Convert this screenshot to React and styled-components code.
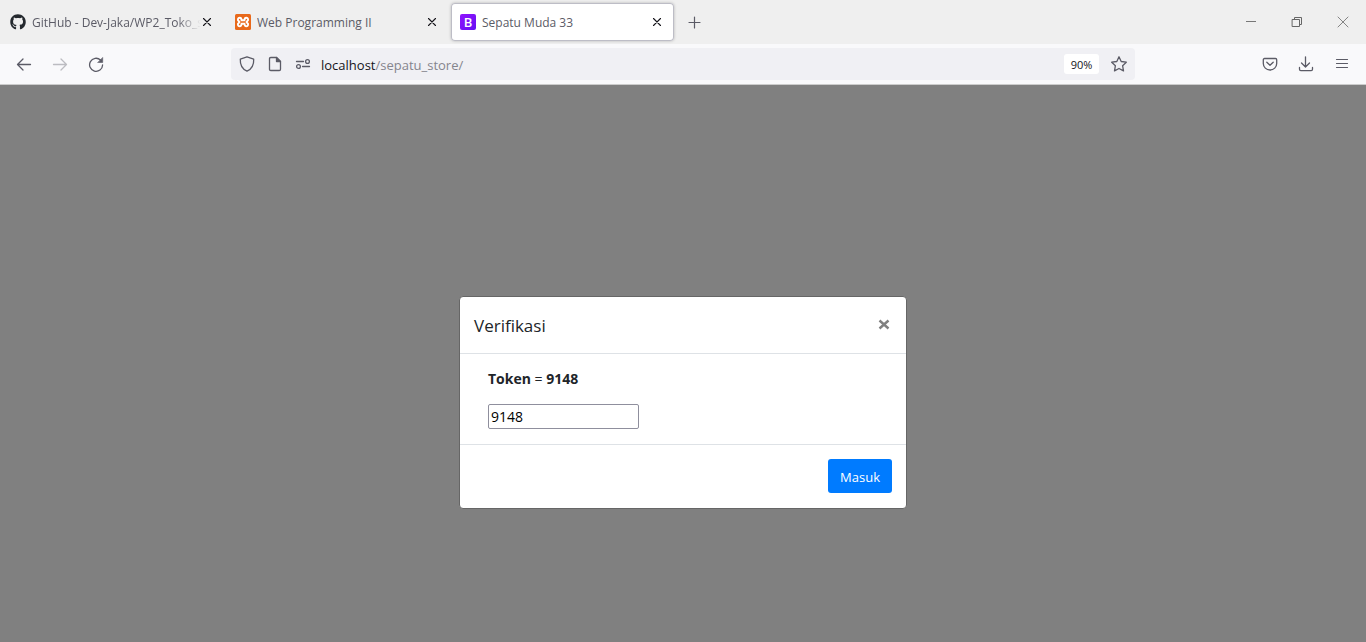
import React from "react";
import styled, { createGlobalStyle, css } from "styled-components";
import { FaGithub } from "react-icons/fa";

const GlobalStyle = createGlobalStyle`
  *, *::before, *::after { box-sizing: border-box; }
  body {
    margin: 0;
    background: #808080;
    font-family: "Open Sans", "Noto Sans", sans-serif;
  }
  button { font-family: inherit; }
`;

const Strip = styled.header`
  display: flex;
  align-items: center;
  height: 44px;
  background: #efefef;
`;

const TabList = styled.nav`
  display: flex;
  height: 44px;
  padding: 3px 0;
`;

const TabItem = styled.div`
  display: flex;
  align-items: center;
  width: 223px;
  margin: 0 1px;
  padding: 0 11px 0 9px;
  border-radius: 4px;
  ${(p) =>
    p.$active &&
    css`
      background: #fff;
      box-shadow: inset 0 0 0 1px #bdbdc6, 0 0 3px rgba(0, 0, 0, 0.25);
    `}
`;

const TabTitle = styled.span`
  flex: 1;
  min-width: 0;
  padding-top: 2px;
  margin-left: 6px;
  overflow: hidden;
  white-space: nowrap;
  font-size: 12px;
  line-height: 20px;
  color: #5b5b66;
  ${(p) => p.$fade && css`mask-image: linear-gradient(to left, transparent, #000 24px);`}
`;

const IconButton = styled.button`
  display: flex;
  flex: none;
  align-items: center;
  justify-content: center;
  width: ${(p) => p.$w || 36}px;
  height: ${(p) => p.$h || 32}px;
  padding: 0;
  border: 0;
  background: none;
  color: ${(p) => p.$color || "#5b5b66"};
`;

const WindowControls = styled.div`
  display: flex;
  margin-left: auto;
`;

const NavBar = styled.div`
  display: flex;
  align-items: center;
  height: 41px;
  padding: 0 6px;
  background: #f9f9fb;
  border-bottom: 1px solid #cccccc;
`;

const Spring = styled.div`
  flex: 0 1 117px;
`;

const AddressBar = styled.div`
  display: flex;
  flex: 1;
  align-items: center;
  height: 32px;
  padding: 0 2px;
  border-radius: 4px;
  background: #f0f0f4;
`;

const Address = styled.div`
  flex: 1;
  padding: 2px 0 0 4px;
  font-size: 13px;
  line-height: 20px;
  color: #85858d;
`;

const Host = styled.span`
  color: #15141a;
`;

const ZoomButton = styled.button`
  width: 35px;
  height: 20px;
  padding: 1px 0 0;
  margin-right: 6px;
  border: 0;
  border-radius: 3px;
  background: #fff;
  font-size: 11px;
  line-height: 20px;
  color: #15141a;
`;

const Page = styled.main`
  display: flex;
  justify-content: center;
  padding: 211px 16px 32px;
`;

const Dialog = styled.form`
  width: 100%;
  max-width: 448px;
  border: 1px solid #666;
  border-radius: 4px;
  background: #fff;
  color: #212529;
`;

const DialogHeader = styled.div`
  display: flex;
  align-items: center;
  justify-content: space-between;
  height: 57px;
  padding: 0 14px;
  border-bottom: 1px solid #dee2e6;
`;

const DialogTitle = styled.h1`
  margin: 0;
  padding-top: 2px;
  font-size: 17px;
  font-weight: 400;
  line-height: 28px;
`;

const DialogBody = styled.div`
  padding: 14px 28px 15px;
`;

const TokenLabel = styled.label`
  display: block;
  margin-bottom: 14px;
  font-size: 14px;
  line-height: 22px;
`;

const TokenInput = styled.input`
  display: block;
  width: 151px;
  height: 25px;
  padding: 1px 2px;
  border: 1px solid #8f8f9d;
  border-radius: 2px;
  background: #fff;
  color: #000;
  font: 14px/20px "Open Sans", "Noto Sans", sans-serif;
`;

const DialogFooter = styled.div`
  display: flex;
  justify-content: flex-end;
  padding: 14px 14px 15px;
  border-top: 1px solid #dee2e6;
`;

const SubmitButton = styled.button`
  height: 34px;
  padding: 2px 12px 0;
  border: 0;
  border-radius: 3px;
  background: #007bff;
  color: #fff;
  font-size: 13px;
  line-height: 20px;
`;

function Icon({ size = 16, stroke = 1.3, children }) {
  return (
    <svg
      width={size}
      height={size}
      viewBox={`0 0 ${size} ${size}`}
      fill="none"
      stroke="currentColor"
      strokeWidth={stroke}
      strokeLinecap="round"
      strokeLinejoin="round"
      aria-hidden="true"
    >
      {children}
    </svg>
  );
}

const XamppLogo = () => (
  <svg width="16" height="16" viewBox="0 0 16 16" aria-hidden="true">
    <rect width="16" height="16" rx="1.5" fill="#e8691b" />
    <path
      d="M4.700 3.800C2.800 3.800 2.300 6 3.600 7L4.500 8l-.9 1c-1.300 1-.8 3.200 1.100 3.200 1.700 0 1.800-1.300 1.800-2.500h3c0 1.200.1 2.500 1.800 2.500 1.900 0 2.400-2.200 1.100-3.200L11.500 8l.9-1c1.300-1 .8-3.200-1.100-3.200-1.700 0-1.800 1.300-1.800 2.500h-3c0-1.200-.1-2.500-1.800-2.500z"
      fill="none"
      stroke="#fff"
      strokeWidth="1.9"
      strokeLinejoin="round"
    />
  </svg>
);

const LogoSquare = styled.span`
  flex: none;
  width: 16px;
  height: 16px;
  border-radius: 2px;
  background: linear-gradient(135deg, #9013fe, #6610f2);
  color: #fff;
  font-size: 13px;
  font-weight: 600;
  line-height: 16px;
  text-align: center;
`;

const tabs = [
  { title: "GitHub - Dev-Jaka/WP2_Toko_sepatu", fade: true, icon: <FaGithub size={16} color="#24292e" /> },
  { title: "Web Programming II", icon: <XamppLogo /> },
  { title: "Sepatu Muda 33", active: true, icon: <LogoSquare aria-hidden="true">B</LogoSquare> },
];

function BrowserTab({ tab }) {
  return (
    <TabItem $active={tab.active}>
      {tab.icon}
      <TabTitle $fade={tab.fade}>{tab.title}</TabTitle>
      <IconButton $w={12} $h={24} $color="#15141a" aria-label={`Close ${tab.title}`}>
        <Icon size={12} stroke={1.1}>
          <path d="M2.500 2.500l7 7M9.500 2.500l-7 7" />
        </Icon>
      </IconButton>
    </TabItem>
  );
}

export default function App() {
  return (
    <>
      <GlobalStyle />
      <Strip>
        <TabList aria-label="Tabs">
          {tabs.map((tab) => (
            <BrowserTab key={tab.title} tab={tab} />
          ))}
        </TabList>
        <IconButton $w={38} aria-label="New tab">
          <Icon stroke={1.2}>
            <path d="M8.500 3v11M3 8.500h11" />
          </Icon>
        </IconButton>
        <WindowControls>
          <IconButton $w={46} $color="#777" aria-label="Minimize">
            <Icon stroke={1}>
              <path d="M3 7.500h10" strokeLinecap="butt" />
            </Icon>
          </IconButton>
          <IconButton $w={46} $color="#666" aria-label="Restore">
            <Icon stroke={1}>
              <path d="M3.500 5.500h7v7h-7zM5.500 5.500v-2h7v7h-2" strokeLinejoin="miter" />
            </Icon>
          </IconButton>
          <IconButton $w={46} $color="#777" aria-label="Close window">
            <Icon stroke={0.9}>
              <path d="M3 3l10 10M13 3L3 13" />
            </Icon>
          </IconButton>
        </WindowControls>
      </Strip>
      <NavBar>
        <IconButton aria-label="Back">
          <Icon stroke={1.3}>
            <path d="M14.500 8.500h-13M7 3L1.500 8.500 7 14" />
          </Icon>
        </IconButton>
        <IconButton $color="#bcbcc1" aria-label="Forward">
          <Icon stroke={1.3}>
            <path d="M1.500 8.500h13M9 3l5.500 5.500L9 14" />
          </Icon>
        </IconButton>
        <IconButton aria-label="Reload">
          <Icon stroke={1.3}>
            <path d="M14.600 9A6.500 6.500 0 1 1 12.500 4" />
            <path d="M14.700 1.800v4.700H10z" fill="currentColor" strokeWidth="0.600" />
          </Icon>
        </IconButton>
        <Spring />
        <AddressBar>
          <IconButton $w={28} aria-label="Tracking protection">
            <Icon>
              <path d="M8 .8L14.700 3.200c.3 5.500-2 9.800-6.700 12C3.300 13 1 8.700 1.300 3.200z" />
            </Icon>
          </IconButton>
          <IconButton $w={28} aria-label="Site information">
            <Icon>
              <path d="M3.800 1.500h5.700l4 4v7.800c0 .8-.5 1.200-1.200 1.200H3.800c-.8 0-1.300-.4-1.300-1.200V2.700c0-.7.5-1.200 1.300-1.200z" />
              <path d="M9.500 1.500v4h4z" fill="currentColor" />
            </Icon>
          </IconButton>
          <IconButton $w={28} aria-label="Permissions">
            <Icon>
              <path d="M1.500 5.500h7M7.500 10.500h7" />
              <circle cx="12.500" cy="5.500" r="1.900" />
              <circle cx="3.500" cy="10.500" r="1.900" />
            </Icon>
          </IconButton>
          <Address>
            <Host>localhost</Host>/sepatu_store/
          </Address>
          <ZoomButton>90%</ZoomButton>
          <IconButton $w={28} aria-label="Bookmark">
            <Icon>
              <path d="M8 .8l2.200 4.700 5.100.7-3.700 3.500.9 5.200L8 12.500l-4.500 2.400.9-5.200L.7 6.200l5.100-.7z" />
            </Icon>
          </IconButton>
        </AddressBar>
        <Spring />
        <IconButton aria-label="Save to Pocket">
          <Icon>
            <path d="M2.500 2.500h11c.7 0 1.200.5 1.200 1.200V7.500a6.700 6.500 0 0 1-13.400 0V3.700c0-.7.5-1.200 1.200-1.200z" />
            <path d="M4.800 6.200L8 9.200l3.200-3" />
          </Icon>
        </IconButton>
        <IconButton aria-label="Downloads">
          <Icon>
            <path d="M7.500 .8v10M3.500 7l4 4 4-4M1.500 11.500v1.800c0 .8.500 1.400 1.300 1.400h10.400c.8 0 1.300-.6 1.300-1.400v-1.800" />
          </Icon>
        </IconButton>
        <IconButton aria-label="Menu">
          <Icon stroke={1.2}>
            <path d="M2.500 3.500h11M2.500 7.500h11M2.500 11.500h11" />
          </Icon>
        </IconButton>
      </NavBar>
      <Page>
        <Dialog onSubmit={(e) => e.preventDefault()}>
          <DialogHeader>
            <DialogTitle>Verifikasi</DialogTitle>
            <IconButton type="button" $w={16} $color="#808080" aria-label="Close">
              <Icon stroke={2.4}>
                <path d="M3.500 3.500l9 8M12.500 3.500l-9 8" strokeLinecap="butt" />
              </Icon>
            </IconButton>
          </DialogHeader>
          <DialogBody>
            <TokenLabel htmlFor="token">
              <b>Token</b> = <b>9148</b>
            </TokenLabel>
            <TokenInput id="token" type="text" defaultValue="9148" />
          </DialogBody>
          <DialogFooter>
            <SubmitButton type="submit">Masuk</SubmitButton>
          </DialogFooter>
        </Dialog>
      </Page>
    </>
  );
}
